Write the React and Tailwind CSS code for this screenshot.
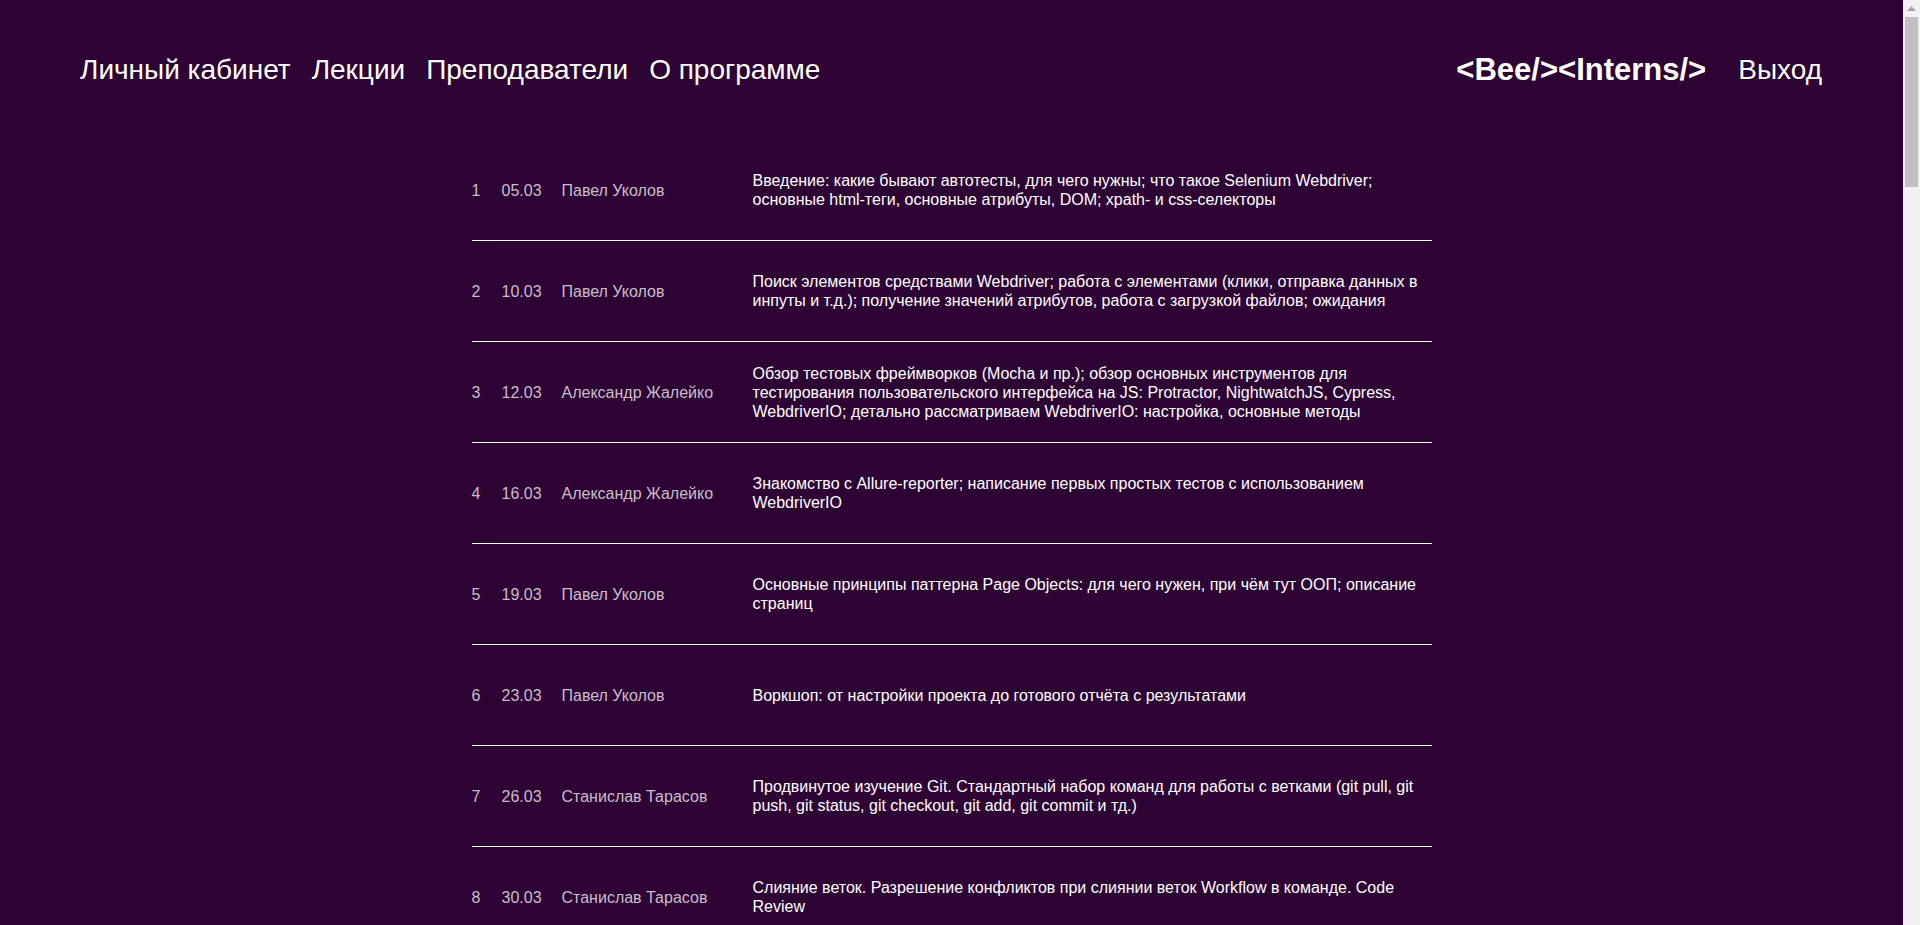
import React from "react";

const rows = [
  ["1", "05.03", "Павел Уколов", "Введение: какие бывают автотесты, для чего нужны; что такое Selenium Webdriver; основные html-теги, основные атрибуты, DOM; xpath- и css-селекторы"],
  ["2", "10.03", "Павел Уколов", "Поиск элементов средствами Webdriver; работа с элементами (клики, отправка данных в инпуты и т.д.); получение значений атрибутов, работа с загрузкой файлов; ожидания"],
  ["3", "12.03", "Александр Жалейко", "Обзор тестовых фреймворков (Mocha и пр.); обзор основных инструментов для тестирования пользовательского интерфейса на JS: Protractor, NightwatchJS, Cypress, WebdriverIO; детально рассматриваем WebdriverIO: настройка, основные методы"],
  ["4", "16.03", "Александр Жалейко", "Знакомство с Allure-reporter; написание первых простых тестов с использованием WebdriverIO"],
  ["5", "19.03", "Павел Уколов", "Основные принципы паттерна Page Objects: для чего нужен, при чём тут ООП; описание страниц"],
  ["6", "23.03", "Павел Уколов", "Воркшоп: от настройки проекта до готового отчёта с результатами"],
  ["7", "26.03", "Станислав Тарасов", "Продвинутое изучение Git. Стандартный набор команд для работы с ветками (git pull, git push, git status, git checkout, git add, git commit и тд.)"],
  ["8", "30.03", "Станислав Тарасов", "Слияние веток. Разрешение конфликтов при слиянии веток Workflow в команде. Code Review"],
];

export default function App() {
  return (
    <div
      className="flex h-[925px] overflow-hidden bg-[#2d0333] text-white"
      style={{ fontFamily: '"Liberation Sans", Arial, sans-serif' }}
    >
      <div className="min-w-0 flex-1">
        <header className="flex h-[140px] items-center justify-between pl-[80px] pr-[81px]">
          <nav className="flex items-center gap-[21px] text-[28px]">
            <a>Личный кабинет</a>
            <a>Лекции</a>
            <a>Преподаватели</a>
            <a>О программе</a>
          </nav>
          <div className="flex items-center gap-[32px]">
            <span className="text-[31px] font-bold">&lt;Bee/&gt;&lt;Interns/&gt;</span>
            <a className="text-[28px]">Выход</a>
          </div>
        </header>
        <main className="mx-auto w-[960px]">
          {rows.map((r) => (
            <div
              key={r[0]}
              className="grid h-[101px] grid-cols-[30px_60px_191px_1fr] items-center border-b border-white text-[16px] leading-[19px]"
            >
              <div className="text-[#c9bdcb]">{r[0]}</div>
              <div className="text-[#c9bdcb]">{r[1]}</div>
              <div className="text-[#c9bdcb]">{r[2]}</div>
              <div className="pr-[12px]">{r[3]}</div>
            </div>
          ))}
        </main>
      </div>
      <div className="flex w-[17px] shrink-0 flex-col items-center bg-[#f1f1f1]">
        <div className="flex h-[17px] w-full items-center justify-center">
          <svg width="9" height="5" viewBox="0 0 9 5">
            <path d="M0 5 L4.5 0 L9 5 Z" fill="#a3a3a3" />
          </svg>
        </div>
        <div className="h-[170px] w-[13px] bg-[#c1c1c1]" />
      </div>
    </div>
  );
}
